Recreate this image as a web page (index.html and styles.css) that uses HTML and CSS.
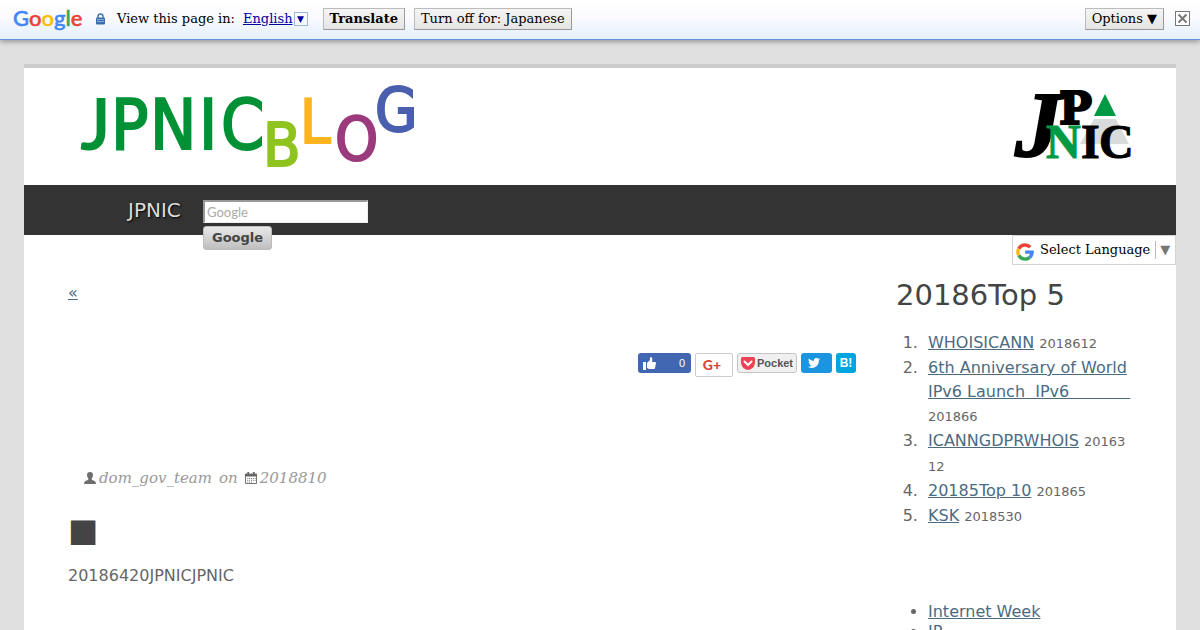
FILE: index.html
```html
<!DOCTYPE html>
<html lang="ja">
<head>
  <meta charset="UTF-8" />
  <meta name="viewport" content="width=device-width, initial-scale=1" />
  <title>JPNIC Blog</title>
  <link rel="stylesheet" href="styles.css">
</head>
<body>

  <div class="translate-bar">
    <div class="google-logo"><span class="g-blue">G</span><span class="g-red">o</span><span class="g-yellow">o</span><span class="g-blue">g</span><span class="g-green">l</span><span class="g-red">e</span></div>
    <svg class="lock" viewBox="0 0 9 12" aria-hidden="true">
      <path d="M2 5V3.2C2 0.2 7 0.2 7 3.2V5" fill="none" stroke="#4679b5" stroke-width="1.5"/>
      <rect y="4.5" width="9" height="7" rx="1" fill="#3b6ea8"/>
      <path d="M1 6.5h7M1 8.5h7" stroke="#9dc0e6" stroke-width="0.8"/>
    </svg>
    <span class="view-label">View this page in:</span>
    <a class="lang-link" href="#"><span>English</span><i>▼</i></a>
    <button class="bar-button strong">Translate</button>
    <button class="bar-button">Turn off for: Japanese</button>
    <button class="bar-button options">Options ▼</button>
    <button class="close" aria-label="Close">
      <svg viewBox="0 0 15 15">
        <rect x="0.5" y="0.5" width="14" height="14" fill="#fff" stroke="#777"/>
        <path d="M3.5 3.5l8 8M11.5 3.5l-8 8" stroke="#777" stroke-width="2"/>
      </svg>
    </button>
  </div>

  <div class="page">
    <header class="header">
      <a href="#" aria-label="JPNIC Blog">
        <svg class="blog-logo" viewBox="0 0 340 90">
          <g class="logo-green">
            <text class="logo-j" x="7" y="69">J</text>
            <text x="37" y="69">P</text>
            <text x="76" y="69">N</text>
            <text x="125" y="69">I</text>
            <text x="147" y="69">C</text>
          </g>
          <g class="logo-blog">
            <text x="189" y="86" fill="#8fc31f" stroke="#8fc31f">B</text>
            <text x="226" y="63" fill="#fbb420" stroke="#fbb420">L</text>
            <text x="261" y="80" fill="#9b3a7c" stroke="#9b3a7c">O</text>
            <text x="301" y="51" fill="#4a5fae" stroke="#4a5fae">G</text>
          </g>
        </svg>
      </a>
      <a href="#" aria-label="JPNIC">
        <svg class="jpnic-logo" viewBox="0 0 120 72">
          <path d="M92 4l11 22H81z" fill="#009a44"/>
          <path d="M81 29h22l13 25H67z" fill="#d9dbda"/>
          <g class="logo-serif">
            <text class="big-j" x="2" y="66">J</text>
            <text class="wide-p" x="46" y="34">P</text>
            <text class="green-n" x="33" y="68">N</text>
            <text x="68" y="68">I</text>
            <text x="86" y="68">C</text>
          </g>
        </svg>
      </a>
    </header>

    <nav class="nav">
      <a class="nav-link" href="#">JPNIC</a>
      <form class="search">
        <input type="text" placeholder="Google" aria-label="Google">
        <button type="button">Google</button>
      </form>
    </nav>

    <a class="language" href="#">
      <svg viewBox="0 0 18 18" fill="none" stroke-width="3.4" aria-hidden="true">
        <path d="M14.2 4.2A7.1 7.1 0 0 0 2.8 5.6" stroke="#ea4335"/>
        <path d="M2.8 5.6a7.1 7.1 0 0 0 0 6.8" stroke="#fbbc05"/>
        <path d="M2.8 12.4a7.1 7.1 0 0 0 10.6 2.2" stroke="#34a853"/>
        <path d="M13.4 14.6A7.1 7.1 0 0 0 16.1 9.1H9.2" stroke="#4285f4"/>
      </svg>
      <span>Select Language</span>
      <i>▼</i>
    </a>

    <div class="columns">
      <main class="main">
        <a class="prev" href="#">«</a>

        <div class="social">
          <button class="facebook">
            <svg viewBox="0 0 13 13" fill="#fff" aria-hidden="true"><path d="M0 5h3v8H0zM4 6l3-3V1q0-1 1-1 2 1 1 5h3q1 0 1 1l-1 5q0 1-1 1H6l-2-1z"/></svg>
            <span>0</span>
          </button>
          <button class="gplus"><b>G</b><b>+</b></button>
          <button class="pocket">
            <svg viewBox="0 0 14 13" aria-hidden="true"><path d="M1.5 0h11Q14 0 14 1.5V6Q13 12 7 13 1 12 0 6V1.5Q0 0 1.5 0z" fill="#ee4056"/><path d="M3.5 4.5L7 8l3.5-3.5" fill="none" stroke="#fff" stroke-width="2" stroke-linecap="round"/></svg>
            <span>Pocket</span>
          </button>
          <button class="twitter" aria-label="Twitter">
            <svg viewBox="0 0 24 20" fill="#fff"><path d="M24 2.4a10 10 0 0 1-2.8.8A5 5 0 0 0 23.3.5a10 10 0 0 1-3.1 1.2 4.9 4.9 0 0 0-8.4 4.5A14 14 0 0 1 1.7 1.1a4.9 4.9 0 0 0 1.5 6.5 5 5 0 0 1-2.2-.6 4.9 4.9 0 0 0 3.9 4.9 5 5 0 0 1-2.2.1 4.9 4.9 0 0 0 4.6 3.4A9.9 9.9 0 0 1 0 17.5 14 14 0 0 0 21.5 4.9 10 10 0 0 0 24 2.4z"/></svg>
          </button>
          <button class="hatena">B!</button>
        </div>

        <p class="byline">
          <svg viewBox="0 0 12 12" fill="#6e6e6e" aria-hidden="true"><path d="M6 0q3 0 3 3 0 2-1.5 4 0 1 3 2 1.5.5 1.5 3H0q0-2.5 1.5-3 3-1 3-2Q3 5 3 3q0-3 3-3z"/></svg>
          <span>dom_gov_team</span>
          <span class="on">on</span>
          <svg viewBox="0 0 13 13" aria-hidden="true"><path d="M.5 2.5h12v10H.5z" fill="#fff" stroke="#666"/><path d="M0 2h13v3H0zM2.5 0h2v3h-2zM8.5 0h2v3h-2z" fill="#666"/><path d="M2.5 7h9M2.5 9h9M2.5 11h6" stroke="#666" stroke-dasharray="1 1"/></svg>
          <span>2018810</span>
        </p>

        <h1 class="square">■</h1>
        <p class="text">20186420JPNICJPNIC</p>
      </main>

      <aside class="sidebar">
        <h2>20186Top 5</h2>
        <ol>
          <li><a href="#">WHOISICANN</a> <small>2018612</small></li>
          <li><a href="#">6th Anniversary of World IPv6 Launch&nbsp;&nbsp;IPv6&nbsp;&nbsp;&nbsp;&nbsp;&nbsp;&nbsp;&nbsp;&nbsp;&nbsp;&nbsp;&nbsp;&nbsp;</a> <small>201866</small></li>
          <li><a href="#">ICANNGDPRWHOIS</a> <small>20163<wbr>12</small></li>
          <li><a href="#">20185Top 10</a> <small>201865</small></li>
          <li><a href="#">KSK</a> <small>2018530</small></li>
        </ol>
        <ul>
          <li><a href="#">Internet Week</a></li>
          <li><a href="#">IP</a></li>
        </ul>
      </aside>
    </div>
  </div>

</body>
</html>
```

FILE: styles.css
```css
* {
  box-sizing: border-box;
}

html {
  height: 100%;
  overflow: hidden;
}

body {
  margin: 0;
  height: 100%;
  overflow: hidden;
  background: #e0e0e0;
  color: #666;
  font: 16px/24px "DejaVu Sans", sans-serif;
}

a {
  color: #4a6b82;
}

svg {
  display: block;
  flex: none;
  overflow: visible;
}

/* translate bar */
.translate-bar {
  display: flex;
  align-items: center;
  height: 40px;
  padding: 0 10px 2px 13px;
  border-bottom: 1px solid #6b90da;
  background: linear-gradient(#fff, #fafaff 45%, #e3effb);
  box-shadow: 0 2px 5px #999;
  color: #000;
  font: 13px/20px "DejaVu Serif", serif;
}

.google-logo {
  width: 68px;
  padding-bottom: 2px;
  font: 500 22px/24px Lato, sans-serif;
  -webkit-text-stroke: 0.5px;
}

.g-blue { color: #4285f4; }
.g-red { color: #ea4335; }
.g-yellow { color: #fbbc05; }
.g-green { color: #34a853; }

.lock {
  width: 9px;
  height: 12px;
  margin: 0 12px 0 15px;
}

.lang-link {
  display: flex;
  align-items: center;
  gap: 1px;
  margin: 0 15px 0 8px;
  color: #0000a0;
  text-decoration: none;
}

.lang-link span {
  text-decoration: underline;
}

.lang-link i {
  width: 14px;
  height: 14px;
  border: 1px solid #9cb8d8;
  font-style: normal;
  font-size: 9px;
  line-height: 12px;
  text-align: center;
}

.bar-button {
  height: 22px;
  margin-right: 9px;
  padding: 0 6px;
  border: 1px solid #aaa;
  border-color: #bbb #999 #999 #bbb;
  background: linear-gradient(#f5f5f5, #e4e4e4);
  color: #000;
  font: inherit;
}

.strong {
  font-weight: bold;
}

.options {
  margin: 0 11px 0 auto;
}

.close {
  width: 15px;
  height: 15px;
  padding: 0;
  border: 0;
  background: none;
}

/* page */
.page {
  margin: 24px 24px 0;
  min-height: 100%;
  border-top: 4px solid #cbcbcb;
  background: #fff;
}

.header {
  display: flex;
  justify-content: space-between;
  padding: 12px 43px 15px 50px;
}

.blog-logo {
  width: 340px;
  height: 90px;
  font-family: "DejaVu Sans Condensed", "DejaVu Sans", sans-serif;
  stroke-width: 2px;
}

.logo-green {
  fill: #009136;
  stroke: #009136;
  font-size: 69px;
}

.logo-j {
  font-family: Lato, sans-serif;
}

.logo-blog {
  font-size: 61px;
}

.jpnic-logo {
  width: 120px;
  height: 72px;
  margin-top: 10px;
  font-family: "Liberation Serif", serif;
  font-weight: bold;
}

.logo-serif {
  stroke: #000;
  stroke-width: 1px;
  font-size: 48px;
}

.green-n {
  fill: #009a44;
  stroke: #009a44;
}

.big-j {
  stroke-width: 2px;
  font-size: 94px;
  font-style: italic;
}

.wide-p {
  stroke-width: 2px;
  font-family: "DejaVu Serif", serif;
  font-size: 44px;
}

.nav {
  display: flex;
  height: 50px;
  padding-left: 104px;
  background: #333;
}

.nav-link {
  width: 75px;
  color: #ddd;
  font-size: 20px;
  line-height: 50px;
  text-decoration: none;
  text-shadow: 1px 1px 2px #000;
}

.search {
  display: flex;
  flex-direction: column;
  align-items: flex-start;
  gap: 3px;
  padding-top: 15px;
}

.search input {
  width: 165px;
  height: 23px;
  flex: none;
  padding: 1px 2px;
  border: 1px solid #eee;
  border-width: 2px 1px 1px 2px;
  border-color: #999 #eee #eee #999;
  border-radius: 0;
  font: 13px Lato, sans-serif;
}

.search input::placeholder {
  color: #aaa;
}

.search button {
  height: 24px;
  flex: none;
  padding: 0 8px 2px;
  border: 1px solid #bbb;
  border-radius: 3px;
  background: linear-gradient(#e8e8e8, #bfbfbf);
  color: #444;
  font: bold 13px "DejaVu Sans", sans-serif;
}

.language {
  display: flex;
  align-items: center;
  width: 164px;
  height: 30px;
  margin-left: auto;
  padding-left: 3px;
  border: 1px solid #d5d5d5;
  color: #000;
  font: 13px/18px "DejaVu Serif", serif;
  text-decoration: none;
}

.language svg {
  width: 18px;
  height: 18px;
  margin: 4px 6px 0 0;
}

.language i {
  margin-left: 5px;
  padding-left: 4px;
  border-left: 1px solid #bbb;
  color: #777;
  font-style: normal;
}

.columns {
  display: grid;
  grid-template-columns: 1fr 236px;
  gap: 40px;
  padding: 12px 44px 0;
}

.prev {
  display: block;
  width: 9px;
  margin-top: 4px;
}

/* share buttons */
.social {
  display: flex;
  justify-content: flex-end;
  gap: 4px;
  margin-top: 48px;
}

.social button {
  display: flex;
  align-items: center;
  justify-content: center;
  height: 20px;
  padding: 0;
  border: 0;
  border-radius: 3px;
  color: #fff;
  font: 11px "Liberation Sans", sans-serif;
}

.social .facebook {
  justify-content: space-between;
  width: 53px;
  padding: 0 6px 0 5px;
  background: #4267b2;
}

.facebook svg {
  width: 13px;
  height: 13px;
}

.social .gplus {
  width: 38px;
  height: 24px;
  padding: 0 4px 2px 0;
  border: 1px solid #ccc;
  border-radius: 2px;
  background: #fff;
  color: #db4437;
  font: bold 14px Lato, sans-serif;
}

.social .pocket {
  gap: 2px;
  width: 60px;
  border: 1px solid #c5c5c5;
  background: #f0f0f0;
  color: #555;
  font-weight: bold;
}

.pocket svg {
  width: 14px;
  height: 13px;
}

.social .twitter {
  width: 31px;
  padding-right: 5px;
  background: #1b95e0;
}

.twitter svg {
  width: 12px;
  height: 10px;
}

.social .hatena {
  width: 20px;
  background: #00a4de;
  font: bold 12px "Liberation Sans", sans-serif;
}

/* post */
.byline {
  display: flex;
  align-items: center;
  gap: 3px;
  margin: 89px 0 0;
  padding-left: 16px;
  color: #999;
  font: italic 15px/24px "DejaVu Serif", serif;
}

.byline svg {
  width: 12px;
  height: 12px;
}

.byline .on {
  margin: 0 4px;
}

.square {
  margin: 20px 0 14px;
  color: #444;
  font-size: 32px;
  font-weight: normal;
  line-height: 40px;
}

.text {
  margin: 0;
}

/* sidebar */
.sidebar h2 {
  margin: 0 0 18px;
  color: #444;
  font-size: 29px;
  font-weight: normal;
  line-height: 36px;
}

.sidebar ol,
.sidebar ul {
  margin: 0;
  padding-left: 32px;
}

.sidebar ol {
  padding-left: 27px;
}

.sidebar ol li {
  padding-left: 5px;
}

.sidebar ul {
  margin-top: 73px;
}

.sidebar small {
  font-size: 13px;
}

.sidebar ul li {
  line-height: 20px;
}
```
